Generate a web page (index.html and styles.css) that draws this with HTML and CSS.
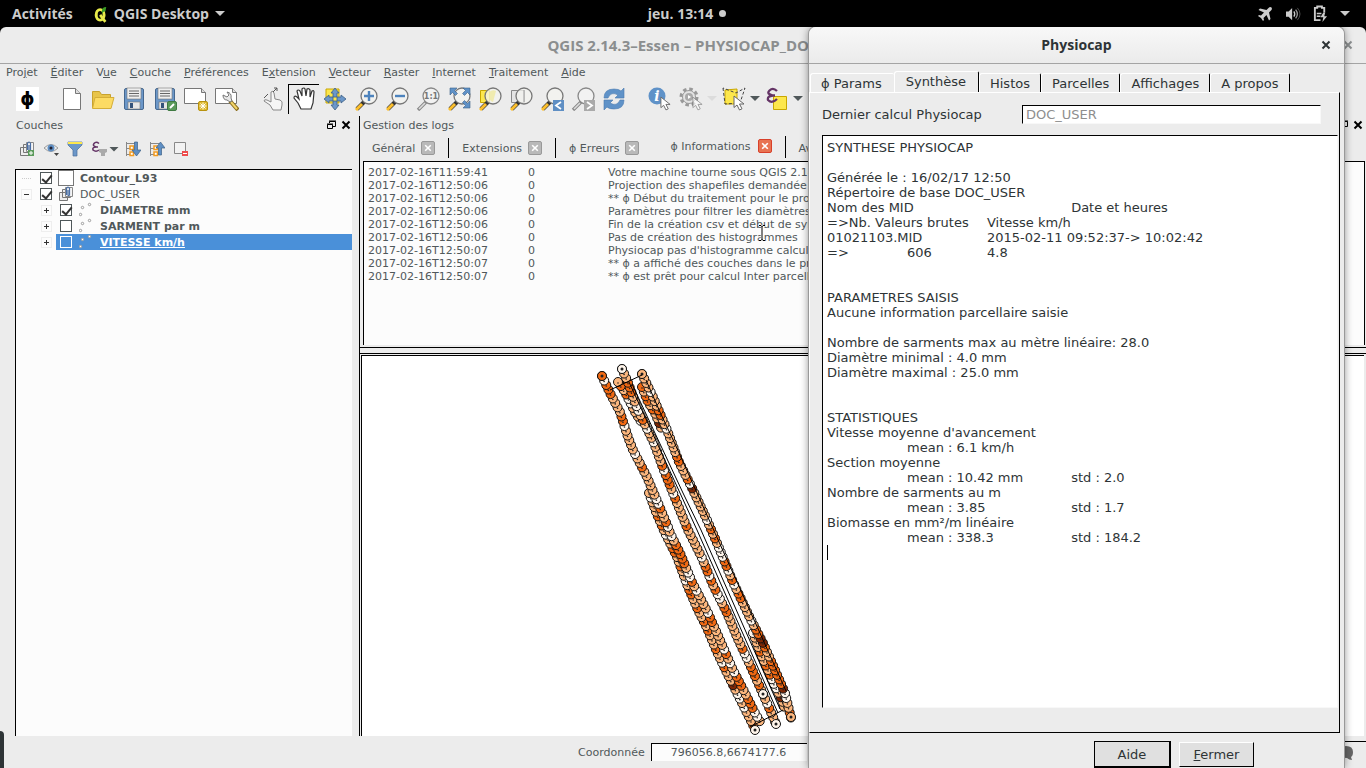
FILE: index.html
```html
<!DOCTYPE html>
<html lang="fr">
<head>
<meta charset="utf-8">
<title>QGIS 2.14.3–Essen – PHYSIOCAP_DOC</title>
<link rel="stylesheet" href="styles.css">
</head>
<body>
<svg class="defs" aria-hidden="true">
  <defs>
    <symbol id="lens" viewBox="0 0 24 24"><path d="M10 15 3 22" stroke="#333" stroke-width="4"/><path d="M8 17 2 23" stroke="#fcbf2d" stroke-width="3"/><circle cx="15" cy="9" r="8" fill="#f4f4f0" fill-opacity=".75" stroke="#777" stroke-width="1.3"/></symbol>
    <symbol id="lens-off" viewBox="0 0 24 24"><path d="M10 15 2 23" stroke="#888" stroke-width="3.4"/><path d="M9 16 3 22" stroke="#ddd" stroke-width="1.6"/><circle cx="15" cy="9" r="8" fill="#f4f4f4" fill-opacity=".75" stroke="#888" stroke-width="1.3"/></symbol>
    <symbol id="floppy" viewBox="0 0 24 24"><rect x="2.500" y="1.500" width="19" height="21" rx="1.500" fill="#6b97c9" stroke="#46688f"/><rect x="5" y="1" width="14" height="11" fill="#eee" stroke="#777" stroke-width=".6"/><path d="M7 4h10M7 6.500h10M7 9h10" stroke="#666"/><rect x="6" y="15" width="12" height="7" fill="#e6e6e6" stroke="#777" stroke-width=".6"/><rect x="8" y="16" width="3" height="5" fill="#34527a"/></symbol>
    <symbol id="pointer" viewBox="0 0 12 16"><path d="M1 1v11.500l3-2.500 2.500 5 2.500-1.200L6.500 9H11z" fill="#fff" stroke="#666"/></symbol>
    <symbol id="copies" viewBox="0 0 16 16"><path d="M1.500 6.500h8v8h-8zM4.500 3.500h8v8h-8z" fill="#eee" stroke="#777"/><path d="M10.500 1.500h4v9h-7v-9h3" fill="#f4f4f4" stroke="#888"/><path d="M8.500 9V2.500q1.500-3 3 0V9q-1 1.500-1.500 0V4" fill="none" stroke="#4a6fa5" stroke-width="1.200"/></symbol>
    <symbol id="points" viewBox="0 0 16 16"><g fill="#fff" stroke="#999"><circle cx="1.500" cy="12.500" r="1.200"/><circle cx="3.500" cy="5.500" r="1.200"/><circle cx="10.500" cy="2.500" r="1.200"/></g></symbol>
    <symbol id="tree-branch" viewBox="0 0 16 16"><path d="M1.500 1v14M1.500 2.500h9M1.500 7.500h4M1.500 13.500h4" stroke="#888" fill="none"/><g fill="#fff" stroke="#f29a1f" stroke-width="1.500"><rect x="5" y="5" width="3.500" height="3.500"/><rect x="5" y="11" width="3.500" height="3.500"/></g></symbol>
    <symbol id="cross" viewBox="0 0 10 10"><path d="m1.500 1.500 7 7m0-7-7 7" stroke="currentColor" stroke-width="2" fill="none"/></symbol>
    <symbol id="float" viewBox="0 0 10 10"><path d="M3.500 3V1.500h6v5H7M3 1h7" stroke="#000" fill="none"/><path d="M1.500 4.500h5v4h-5zM1 4h6" stroke="#000" fill="none"/></symbol>
  </defs>
</svg>

<header class="topbar">
  <button class="activities">Activités</button>
  <button class="app-menu">
    <svg class="app-logo" viewBox="0 0 16 20"><ellipse cx="7" cy="11" rx="4.500" ry="6" fill="none" stroke="#e8ea4a" stroke-width="3.400"/><path d="m7 11 6 8" stroke="#e8ea4a" stroke-width="3"/><path d="M9 7q0-5 5-5l-1 5q-2-1-4 3z" fill="#3a9a24"/></svg>
    QGIS Desktop
    <svg class="caret-down" viewBox="0 0 10 6"><path d="M0 0h10L5 5z" fill="#ccc"/></svg>
  </button>
  <div class="clock">jeu. 13:14<i class="clock-dot"></i></div>
  <div class="status-icons">
    <svg class="airplane" viewBox="0 0 16 16"><path d="M14.500 1.500q-1.500-1-3 .5L9.500 4 3 2.500 1.500 4 7 6.500 4 9.500 2 9 1 10l3 2 2 3 1-1-.5-2 3-3 2.500 5.500L13.500 13 12 6.500l2-2q1.500-1.500.5-3z" fill="#ccc"/></svg>
    <svg class="speaker" viewBox="0 0 18 16"><path d="M1 5h3l4-4v14l-4-4H1z" fill="#ccc"/><path d="M10 5q2 3 0 6" stroke="#ccc" stroke-width="1.500" fill="none"/><path d="M12 3q4 5 0 10" stroke="#999" stroke-width="1.500" fill="none"/><path d="M14 1q6 7 0 14" stroke="#555" fill="none"/></svg>
    <svg class="battery" viewBox="0 0 16 18"><path d="M12 8V3H9.500V1.500h-5V3H2v13h6" fill="none" stroke="#ccc" stroke-width="2"/><path d="M4 9h5M4 12h4" stroke="#ccc" stroke-width="1.500"/><path d="m11 8-3 5h3l-1 5 5-6h-3l1-4z" fill="#ccc"/></svg>
    <svg class="caret-down" viewBox="0 0 10 6"><path d="M0 0h10L5 5z" fill="#ccc"/></svg>
  </div>
</header>

<main class="window">
  <div class="titlebar main-title"><h1>QGIS 2.14.3–Essen – PHYSIOCAP_DOC</h1><button aria-label="Fermer la fenêtre"><svg viewBox="0 0 10 10"><use href="#cross"/></svg></button></div>
  <nav class="menubar">
    <button>Pro<u>j</u>et</button><button><u>É</u>diter</button><button>V<u>u</u>e</button><button><u>C</u>ouche</button><button><u>P</u>références</button><button>E<u>x</u>tension</button><button><u>V</u>ecteur</button><button><u>R</u>aster</button><button><u>I</u>nternet</button><button><u>T</u>raitement</button><button><u>A</u>ide</button>
  </nav>
  <div class="toolbar">
    <button class="phi-tool" aria-label="Physiocap">ϕ</button>
    <div class="tools">
      <button aria-label="Nouveau"><svg viewBox="0 0 24 24"><path d="M3.500 1.500h12l5 5v16h-17z" fill="#fff" stroke="#777"/><path d="M15.500 1.500v5h5" fill="#ddd" stroke="#777"/></svg></button>
      <button aria-label="Ouvrir"><svg viewBox="0 0 24 24"><path d="M1.500 21V4.500h7l2 3h9V11" fill="#e8c44a" stroke="#c8a22e"/><path d="M1.500 21.500 4 10.500h19l-3 11z" fill="#fcdb64" stroke="#d5ae38"/></svg></button>
      <button aria-label="Enregistrer"><svg viewBox="0 0 24 24"><use href="#floppy"/></svg></button>
      <button aria-label="Enregistrer sous"><svg viewBox="0 0 24 24"><use href="#floppy"/><rect x="14.500" y="14.500" width="9" height="9" rx="1.500" fill="#5b9a5b" stroke="#3f7a42"/><path d="m17 21 4-4" stroke="#fff" stroke-width="2"/></svg></button>
      <button aria-label="Nouveau composeur"><svg viewBox="0 0 24 24"><path d="M.5 1.500h17l4 4v11H.5z" fill="#fff" stroke="#777"/><path d="M17.500 1.500v4h4" fill="#ddd" stroke="#777"/><rect x="14.500" y="14.500" width="9" height="9" rx="1.500" fill="#e0b92e" stroke="#b8920f"/><path d="M19 15.500v7M15.500 19h7M16.500 16.500l5 5M21.500 16.500l-5 5" stroke="#fff"/></svg></button>
      <button aria-label="Gestionnaire de composeurs"><svg viewBox="0 0 24 24"><path d="M.5 1.500h17l4 4v11H.5z" fill="#fff" stroke="#777"/><path d="M17.500 1.500v4h4" fill="#ddd" stroke="#777"/><path d="m15 14 8 9" stroke="#8a6d1d" stroke-width="4"/><path d="m16 15 6 7" stroke="#f2d469" stroke-width="2"/><path d="M12 5q5 1 4 6l1 3-2 1-3-2q-4 0-4-5l4 2 2-2z" fill="#e8e8e8" stroke="#777"/></svg></button>
    </div>
    <div class="tools">
      <button aria-label="Zoom tactile"><svg viewBox="0 0 24 24"><path d="M12 23 9 18l-6-4q0-2 3-1l4 2V5q2-2 3 1l1 6 5 1q3 1 2 5l-1 5z" fill="#f6f6f6" stroke="#888"/><path d="m12 5 4-4m-3 0h3v3M7 7l-4 4" fill="none" stroke="#555"/></svg></button>
      <button class="pressed" aria-label="Se déplacer" aria-pressed="true"><svg viewBox="0 0 24 24"><path d="m9 22-3-6-4-5q0-3 3-1l2 2L5 4q1-2 3 0l2 5V2q2-2 3 0l1 7 1-7q2-1 3 1v7l2-6q2-1 2 1l-1 11-2 6z" fill="#fff" stroke="#333" stroke-width="1.200"/></svg></button>
      <button aria-label="Centrer sur la sélection"><svg viewBox="0 0 24 24"><path d="M3 2h13v14H3z" fill="#fde74c" stroke="#c9a700"/><path d="m12 1 4 5h-2v4h-4V6H8zM12 23l4-5h-2v-4h-4v4H8zM1 12l5-4v2h4v4H6v2zM23 12l-5-4v2h-4v4h4v2z" fill="#6b97c9" stroke="#3e6187" stroke-width=".8"/></svg></button>
      <button aria-label="Zoom +"><svg viewBox="0 0 24 24"><use href="#lens"/><path d="M10 9h10M15 4v10" stroke="#4d83bd" stroke-width="2.400"/></svg></button>
      <button aria-label="Zoom -"><svg viewBox="0 0 24 24"><use href="#lens"/><path d="M10 9h10" stroke="#4d83bd" stroke-width="2.400"/></svg></button>
      <button aria-label="Zoom 1:1"><svg viewBox="0 0 24 24"><use href="#lens-off"/><text x="15" y="12" class="ratio">1:1</text></svg></button>
      <button aria-label="Zoom étendu"><svg viewBox="0 0 24 24"><use href="#lens"/><path d="M3 1h7L7.500 3.500l3 3-2 2-3-3L3 8zM23 1h-7l2.500 2.500-3 3 2 2 3-3L23 8zM23 21h-7l2.500-2.500-3-3 2-2 3 3L23 14z" fill="#5f92c8" stroke="#3e6187" stroke-width=".6"/></svg></button>
      <button aria-label="Zoom sélection"><svg viewBox="0 0 24 24"><path d="M2.500 3.500h9v12h-9z" fill="#fde74c" stroke="#c9a700"/><use href="#lens"/><path d="M11 5q4-3 7-1l-3 11q-5-1-4-10z" fill="#efe9a0" opacity=".8"/></svg></button>
      <button aria-label="Zoom couche"><svg viewBox="0 0 24 24"><path d="M2.500 3.500h13v12h-13z" fill="#e4e4e4" stroke="#888"/><use href="#lens"/><path d="M15 3v12" stroke="#999"/></svg></button>
      <button aria-label="Zoom précédent"><svg viewBox="0 0 24 24"><use href="#lens"/><path d="M13 13h11v11H13z" fill="#5f8fc4"/><path d="m21 15-5 3.500 5 3.500" fill="none" stroke="#fff" stroke-width="1.800"/></svg></button>
      <button aria-label="Zoom suivant"><svg viewBox="0 0 24 24"><use href="#lens-off"/><path d="M13 13h11v11H13z" fill="#aaa"/><path d="m16 15 5 3.500-5 3.500" fill="none" stroke="#fff" stroke-width="1.800"/></svg></button>
      <button aria-label="Rafraîchir"><svg viewBox="0 0 24 24"><path d="M2 11q0-9 10-9 5 0 7 2l3-3v10h-9l3-3q-7-4-10 3zM22 13q0 9-10 9-5 0-7-2l-3 3V13h9l-3 3q7 4 10-3z" fill="#5f92c8" stroke="#4a7bb0" stroke-width=".6"/></svg></button>
    </div>
    <div class="tools">
      <button aria-label="Identifier"><svg viewBox="0 0 24 24"><circle cx="9" cy="9" r="8.500" fill="#5f92c8"/><text x="9" y="14" class="info-letter">i</text><use href="#pointer" x="12" y="9" width="11" height="15"/></svg></button>
      <button aria-label="Action"><svg viewBox="0 0 24 24"><circle cx="10" cy="10" r="8" fill="none" stroke="#999" stroke-width="3" stroke-dasharray="3.500 2.780"/><circle cx="10" cy="10" r="6.500" fill="#e4e4e4" stroke="#999"/><circle cx="10" cy="10" r="4" fill="#aaa"/><path d="m9 8 3 2-3 2z" fill="#fff"/><use href="#pointer" x="13" y="9" width="11" height="15" opacity=".6"/></svg></button>
      <span class="drop faint"></span>
      <button aria-label="Sélectionner"><svg viewBox="0 0 24 24"><path d="m3 3 12-1v15H3z" fill="#fde74c" stroke="#c9a700"/><path d="m1 1 2 16 15-1 5-15-9 5z" fill="none" stroke="#444" stroke-dasharray="3 2"/><use href="#pointer" x="11" y="8" width="12" height="16"/></svg></button>
      <span class="drop"></span>
      <button aria-label="Sélection par expression"><svg viewBox="0 0 24 24"><path d="M8.500 9.500h13v13h-13z" fill="#fde74c" stroke="#c9a700"/><path d="M12 4Q8 0 4.500 3.500T8 8.500Q2 9 3 13q4 4 9-1M6 8.500h4" fill="none" stroke="#643466" stroke-width="2.300"/></svg></button>
      <span class="drop"></span>
      <button aria-label="Désélectionner"><svg viewBox="0 0 24 24"><path d="M2.500 3.500h18v12h-18z" fill="#fde74c" stroke="#a88a00"/></svg></button>
    </div>
  </div>

  <div class="workspace">
    <section class="layers">
      <div class="dock-title"><h2>Couches</h2><button aria-label="Détacher"><svg viewBox="0 0 10 10"><use href="#float"/></svg></button><button aria-label="Fermer"><svg viewBox="0 0 10 10"><use href="#cross"/></svg></button></div>
      <div class="layer-tools">
        <button aria-label="Ajouter un groupe"><svg viewBox="0 0 16 16"><use href="#copies"/><path d="M9 9h6v6H9z" fill="#5b9a5b"/><path d="M12 10v4m-2-2h4" stroke="#fff"/></svg></button>
        <button aria-label="Visibilité"><svg viewBox="0 0 16 16"><path d="M1 7q7-7 14 0-7 7-14 0z" fill="#eee" stroke="#999"/><circle cx="8" cy="7" r="3.500" fill="#5f8fc4"/><circle cx="8" cy="7" r="1.500" fill="#223"/><path d="M11 12h5l-2.500 3z" fill="#444"/></svg></button>
        <button aria-label="Filtrer"><svg viewBox="0 0 16 16"><path d="M1 1h14v3L10 9v6H6V9L1 4z" fill="#6b97c9" stroke="#4a6f98" stroke-width=".7"/><path d="M1 1h14v2H1z" fill="#fde74c"/></svg></button>
        <button aria-label="Filtrer par expression"><svg viewBox="0 0 16 16"><path d="M8 2.500Q5 0 3 2.500T5.500 6Q1 6 2 9q3 2.500 6 0M4 6h3" fill="none" stroke="#643466" stroke-width="1.600"/><path d="M8 8h8v3l-2 1v3h-4v-3l-2-1z" fill="#aaa"/></svg></button>
        <span class="drop"></span>
        <button aria-label="Tout déplier"><svg viewBox="0 0 16 16"><use href="#tree-branch"/><path d="M9.500 1h3v8H16l-4.500 6L7 9h2.500z" fill="#5f8fc4" stroke="#3e6187" stroke-width=".7"/></svg></button>
        <button aria-label="Tout replier"><svg viewBox="0 0 16 16"><use href="#tree-branch"/><path d="M9.500 14h3V7H16l-4.500-6L7 7h2.500z" fill="#5f8fc4" stroke="#3e6187" stroke-width=".7"/></svg></button>
        <button aria-label="Supprimer"><svg viewBox="0 0 16 16"><path d="M1.500 1.500h11v11h-11z" fill="#f2f2f2" stroke="#888"/><path d="M9 10h6v5H9z" fill="#ee4b4b"/><path d="M10 12.500h4" stroke="#fff"/></svg></button>
      </div>
      <ul class="tree">
        <li class="row root"><span class="twig"></span><input type="checkbox" id="l1" checked><span class="swatch"></span><label for="l1"><b>Contour_L93</b></label></li>
        <li class="row root"><span class="expander open"></span><input type="checkbox" id="l2" checked><svg class="layer-icon" viewBox="0 0 16 16"><use href="#copies"/></svg><label for="l2">DOC_USER</label></li>
        <li class="row child"><span class="expander"></span><div class="entry"><input type="checkbox" id="l3" checked><svg class="layer-icon" viewBox="0 0 16 16"><use href="#points"/></svg><label for="l3"><b>DIAMETRE mm</b></label></div></li>
        <li class="row child"><span class="expander"></span><div class="entry"><input type="checkbox" id="l4"><svg class="layer-icon" viewBox="0 0 16 16"><use href="#points"/></svg><label for="l4"><b>SARMENT par m</b></label></div></li>
        <li class="row child selected"><span class="expander"></span><div class="entry"><input type="checkbox" id="l5"><svg class="layer-icon" viewBox="0 0 16 16"><use href="#points"/></svg><label for="l5"><b>VITESSE km/h</b></label></div></li>
      </ul>
    </section>

    <div class="center">
      <section class="logs">
        <div class="dock-title"><h2>Gestion des logs</h2><button aria-label="Détacher"><svg viewBox="0 0 10 10"><use href="#float"/></svg></button><button aria-label="Fermer"><svg viewBox="0 0 10 10"><use href="#cross"/></svg></button></div>
        <div class="log-tabs">
          <button>Général<span class="tab-close"><svg viewBox="0 0 10 10"><use href="#cross"/></svg></span></button>
          <button>Extensions<span class="tab-close"><svg viewBox="0 0 10 10"><use href="#cross"/></svg></span></button>
          <button class="before-active">ϕ Erreurs<span class="tab-close"><svg viewBox="0 0 10 10"><use href="#cross"/></svg></span></button>
          <button class="active">ϕ Informations<span class="tab-close"><svg viewBox="0 0 10 10"><use href="#cross"/></svg></span></button>
          <button>Avertissements</button>
        </div>
        <div class="log-box">
          <table class="log-table">
            <tr><td>2017-02-16T11:59:41</td><td>0</td><td>Votre machine tourne sous QGIS 2.14</td></tr>
            <tr><td>2017-02-16T12:50:06</td><td>0</td><td>Projection des shapefiles demandée</td></tr>
            <tr><td>2017-02-16T12:50:06</td><td>0</td><td>** ϕ Début du traitement pour le projet</td></tr>
            <tr><td>2017-02-16T12:50:06</td><td>0</td><td>Paramètres pour filtrer les diamètres</td></tr>
            <tr><td>2017-02-16T12:50:06</td><td>0</td><td>Fin de la création csv et début de synthèse</td></tr>
            <tr><td>2017-02-16T12:50:06</td><td>0</td><td>Pas de création des histogrammes</td></tr>
            <tr><td>2017-02-16T12:50:07</td><td>0</td><td>Physiocap pas d'histogramme calculé</td></tr>
            <tr><td>2017-02-16T12:50:07</td><td>0</td><td>** ϕ a affiché des couches dans le projet</td></tr>
            <tr><td>2017-02-16T12:50:07</td><td>0</td><td>** ϕ est prêt pour calcul Inter parcellaire</td></tr>
          </table>
          <svg class="ibeam" viewBox="0 0 8 16"><path d="M1 .5h2l1 1 1-1h2M4 1v14M1 15.500h2l1-1 1 1h2" fill="none" stroke="#fff" stroke-width="2.500"/><path d="M1 .5h2l1 1 1-1h2M4 1v14M1 15.500h2l1-1 1 1h2" fill="none" stroke="#000"/></svg>
        </div>
      </section>
      <div class="splitter"></div>
      <section class="map" aria-label="Carte"><svg id="canvas"></svg></section>
    </div>
  </div>

  <footer class="statusbar">
    <label for="coord">Coordonnée</label>
    <input id="coord" type="text" value="796056.8,6674177.6">
    <div class="status-fill"></div>
    <svg class="bubble" viewBox="0 0 16 16"><path d="M8 1q7 0 7 6 0 4-2 5l1 3q-3 0-5-2-8 0-8-6 0-6 7-6z" fill="#666"/></svg>
  </footer>
  <div class="tray-handle"></div>
</main>

<section class="dialog" role="dialog" aria-label="Physiocap">
  <div class="titlebar dialog-title"><h2>Physiocap</h2><button aria-label="Fermer"><svg viewBox="0 0 10 10"><use href="#cross"/></svg></button></div>
  <div class="dialog-tabs">
    <button>ϕ Params</button><button class="active">Synthèse</button><button>Histos</button><button>Parcelles</button><button>Affichages</button><button>A propos</button>
  </div>
  <div class="pane">
    <div class="field"><label for="last">Dernier calcul Physiocap</label><input id="last" type="text" value="DOC_USER" disabled></div>
    <div class="report-wrap">
<textarea class="report" aria-label="Synthèse" spellcheck="false" readonly>
SYNTHESE PHYSIOCAP

Générée le : 16/02/17 12:50
Répertoire de base DOC_USER
Nom des MID&#9;&#9; Date et heures
=&gt;Nb. Valeurs brutes&#9;Vitesse km/h
01021103.MID&#9;2015-02-11 09:52:37-&gt; 10:02:42
=&gt;&#9;606&#9;4.8


PARAMETRES SAISIS
Aucune information parcellaire saisie

Nombre de sarments max au mètre linéaire: 28.0
Diamètre minimal : 4.0 mm
Diamètre maximal : 25.0 mm


STATISTIQUES
Vitesse moyenne d'avancement
&#9;mean : 6.1 km/h
Section moyenne
&#9;mean : 10.42 mm&#9; std : 2.0
Nombre de sarments au m
&#9;mean : 3.85&#9; std : 1.7
Biomasse en mm²/m linéaire
&#9;mean : 338.3&#9; std : 184.2
</textarea>
      <span class="text-caret"></span>
    </div>
  </div>
  <div class="dialog-actions"><button class="default">Aide</button><button><u>F</u>ermer</button></div>
</section>
<script src="map.js"></script>
</body>
</html>
```

FILE: styles.css
```css
* { box-sizing: border-box; }
html, body { height: 100%; }
body {
  margin: 0;
  display: flex;
  flex-direction: column;
  overflow: hidden;
  background: #000;
  color: #50585a;
  font: 11px/13px "DejaVu Sans", sans-serif;
}
button {
  margin: 0;
  padding: 0;
  border: 0;
  background: none;
  color: inherit;
  font: inherit;
  white-space: nowrap;
}
svg { display: block; flex: none; }
h1, h2 { margin: 0; font: inherit; }
.defs { position: absolute; width: 0; height: 0; }

/* Desktop bar */
.topbar {
  position: relative;
  flex: none;
  height: 27px;
  display: flex;
  align-items: center;
  padding: 0 16px 0 12px;
  color: #ccc;
  font: bold 14px/20px "Open Sans", sans-serif;
}
.activities { margin-right: 21px; }
.app-menu { display: flex; align-items: center; gap: 6px; }
.app-logo { width: 14px; height: 18px; }
.caret-down { width: 10px; height: 6px; }
.clock {
  position: absolute;
  left: 0;
  right: 0;
  padding-left: 8px;
  text-align: center;
  pointer-events: none;
}
.clock-dot {
  display: inline-block;
  width: 7px;
  height: 7px;
  margin: 0 0 2px 6px;
  border-radius: 50%;
  background: #ccc;
}
.status-icons { margin-left: auto; display: flex; align-items: center; gap: 12px; }
.airplane { width: 16px; height: 16px; }
.speaker { width: 16px; height: 14px; }
.battery { width: 15px; height: 17px; }

/* Main window */
.window {
  position: relative;
  flex: 1;
  min-height: 0;
  display: flex;
  flex-direction: column;
  background: #ececec;
  border-radius: 6px 6px 0 0;
}
.titlebar {
  flex: none;
  position: relative;
  height: 37px;
  display: flex;
  align-items: center;
  justify-content: center;
  border-bottom: 1px solid #a4a4a4;
  color: #8b8e8f;
  font: bold 14px/20px "Open Sans", sans-serif;
}
.main-title { font-size: 15px; }
.titlebar button { position: absolute; right: 13px; }
.titlebar svg { width: 10px; height: 10px; }
.menubar { flex: none; display: flex; gap: 13px; padding: 2px 6px; }
.toolbar { flex: none; height: 35px; display: flex; align-items: center; padding-left: 16px; overflow: hidden; }
.phi-tool {
  width: 23px;
  height: 24px;
  margin-right: 17px;
  background: #fff;
  color: #000;
  font: bold 18px/24px "DejaVu Sans", sans-serif;
}
.tools { display: flex; align-items: center; margin-right: 15px; }
.tools button { width: 31px; height: 30px; display: flex; align-items: center; justify-content: center; }
.tools svg { width: 24px; height: 24px; }
.tools .pressed { border-top: 1px solid #000; border-left: 1px solid #000; }
.ratio { font: bold 8px "DejaVu Sans", sans-serif; text-anchor: middle; fill: #777; }
.info-letter { font: italic bold 14px "DejaVu Serif", serif; text-anchor: middle; fill: #fff; }
.drop { flex: none; width: 10px; height: 5px; margin: 0 1px; background: #50585a; clip-path: polygon(0 0, 100% 0, 50% 100%); }
.drop.faint { background: #dcdcdc; }

.workspace { flex: 1; min-height: 0; display: flex; }
.dock-title { flex: none; height: 18px; display: flex; align-items: center; gap: 5px; }
.dock-title h2 { flex: 1; }
.dock-title button { color: #000; }
.dock-title svg { width: 10px; height: 10px; }

/* Layer dock */
.layers { flex: none; width: 352px; display: flex; flex-direction: column; padding-left: 15px; }
.layers .dock-title { padding: 0 1px; }
.layer-tools { display: flex; align-items: center; gap: 8px; height: 35px; padding: 0 4px 5px; }
.layer-tools svg { width: 16px; height: 16px; }
.layer-tools .drop { margin: 0 -2px 0 -6px; }
.tree {
  flex: 1;
  margin: 0;
  padding: 0;
  list-style: none;
  background: #fcfcfc;
  border-top: 1px solid #000;
  border-left: 1px solid #000;
}
.row { height: 16px; display: flex; align-items: center; }
.root { padding-left: 6px; gap: 6px; }
.root input { margin-left: 3px; }
.child { padding-left: 26px; gap: 5px; }
.entry { flex: 1; height: 16px; display: flex; align-items: center; gap: 7px; padding-left: 4px; }
.selected .entry { background: #4a90d9; color: #fff; text-decoration: underline; }
.twig { width: 9px; border-top: 1px dotted #ccc; }
.expander {
  flex: none;
  width: 9px;
  height: 9px;
  outline: 1px solid #eee;
  background:
    linear-gradient(#333, #333) center / 5px 1px no-repeat,
    linear-gradient(#333, #333) center / 1px 5px no-repeat;
}
.expander.open { background: linear-gradient(#333, #333) center / 5px 1px no-repeat; }
.tree input {
  flex: none;
  appearance: none;
  position: relative;
  width: 12px;
  height: 12px;
  border: 1px solid #50585a;
  background: #fff;
}
.entry input { margin: 0; }
.root input { margin: 0 0 0 3px; }
.tree input:checked::after {
  content: "";
  position: absolute;
  left: 3px;
  top: 0;
  width: 4px;
  height: 8px;
  border: solid #333;
  border-width: 0 2px 2px 0;
  transform: rotate(40deg);
}
.selected .entry input { background: transparent; border-color: #fff; }
.swatch { width: 16px; height: 16px; border: 1px solid #777; background: #fff; }
.layer-icon { width: 16px; height: 16px; }
.entry .layer-icon { margin-right: -2px; }

/* Log dock and map */
.center { flex: 1; min-width: 0; margin-left: 7px; display: flex; flex-direction: column; border-left: 1px solid #000; }
.logs { flex: none; padding: 0 1px 2px 3px; }
.logs .dock-title { padding-right: 2px; }
.log-tabs { display: flex; height: 27px; overflow: hidden; align-items: flex-end; padding-bottom: 3px; }
.log-tabs button {
  height: 20px;
  display: flex;
  align-items: center;
  gap: 6px;
  padding: 0 13px;
  border-right: 1px solid #000;
}
.log-tabs button:first-child { padding-left: 9px; }
.log-tabs .before-active { border-right: 0; }
.log-tabs .active { height: 22px; padding-left: 18px; padding-bottom: 2px; gap: 7px; }
.tab-close { width: 14px; height: 14px; padding: 2px; border: 1px solid #999; border-radius: 2px; background: #b9b9b9; color: #fff; }
.tab-close svg { width: 8px; height: 8px; }
.active .tab-close { background: #e87352; border-color: #d8402a; }
.log-box {
  position: relative;
  height: 184px;
  padding: 4px;
  overflow: hidden;
  background: #fcfcfc;
  border: 1px solid #000;
  border-bottom: 0;
}
.log-table { border-collapse: collapse; table-layout: fixed; width: 100%; white-space: nowrap; }
.log-table td { padding: 0; height: 13px; line-height: 13px; }
.log-table td:first-child { width: 160px; }
.log-table td:nth-child(2) { width: 80px; }
.ibeam { position: absolute; left: 394px; top: 63px; width: 8px; height: 16px; }
.splitter { flex: none; height: 7px; border-top: 1px solid #000; border-bottom: 1px solid #000; }
.map { flex: 1; min-height: 0; margin: 1px 2px 0 1px; background: #fff; border-top: 1px solid #000; border-left: 1px solid #000; }
.map svg { width: 100%; height: 100%; }

.statusbar { flex: none; height: 32px; display: flex; align-items: center; gap: 6px; padding: 0 2px 0 578px; }
.statusbar input {
  width: 156px;
  height: 18px;
  padding: 0 0 0 19px;
  border: 0;
  border-top: 1px solid #000;
  border-left: 1px solid #000;
  background: #fcfcfc;
  color: inherit;
  font: inherit;
}
.status-fill { flex: 1; height: 22px; border-top: 1px solid #000; }
.bubble { width: 16px; height: 16px; margin: 2px 10px 0 -36px; }
.tray-handle { position: absolute; left: 0; bottom: 0; width: 4px; height: 37px; border-radius: 0 4px 0 0; background: #2e3436; }

/* Physiocap dialog */
.dialog {
  position: absolute;
  top: 27px;
  right: 22px;
  bottom: 0;
  width: min(535px, 96vw);
  display: flex;
  flex-direction: column;
  border-radius: 7px 7px 0 0;
  background: #ececec;
  box-shadow: 0 0 0 1px #999, 0 0 8px rgba(0, 0, 0, .5);
  color: #2e3436;
  font-size: 13px;
  line-height: 15px;
  clip-path: inset(0 -12px 0 -12px);
}
.dialog-title { border-radius: 7px 7px 0 0; background: linear-gradient(#f8f8f8, #ebebeb); color: #2e3436; }
.dialog-tabs { flex: none; height: 28px; display: flex; align-items: flex-end; padding-left: 1px; }
.dialog-tabs button {
  height: 19px;
  padding: 0 10px;
  border-top: 1px solid #fff;
  border-left: 1px solid #fff;
  border-right: 1px solid #000;
  border-radius: 3px 2px 0 0;
}
.dialog-tabs button:first-child { padding: 0 12px 0 10px; border-right: 0; }
.dialog-tabs .active { height: 21px; padding: 0 12px 2px 11px; }
.pane {
  flex: 1;
  min-height: 0;
  margin-right: 4px;
  padding: 12px 1px 24px 12px;
  display: flex;
  flex-direction: column;
  gap: 11px;
  border-top: 1px solid #fff;
  border-left: 1px solid #fff;
  border-right: 1px solid #000;
  border-bottom: 1px solid #000;
}
.field { display: flex; align-items: center; padding-right: 17px; }
.field label { width: 200px; padding-right: 8px; }
.field input {
  flex: 1;
  min-width: 0;
  height: 19px;
  padding: 0 3px;
  border: 1px solid;
  border-color: #000 #f8f8f8 #f8f8f8 #000;
  background: #fff;
  color: #8e8e8e;
  font: inherit;
}
.report-wrap { flex: 1; position: relative; display: flex; }
.report {
  flex: 1;
  margin: 0;
  padding: 4px;
  border: 1px solid;
  border-color: #000 #f8f8f8 #f8f8f8 #000;
  outline: 0;
  resize: none;
  overflow: hidden;
  background: #fff;
  color: inherit;
  font: 13px/15px "DejaVu Sans", sans-serif;
  white-space: pre;
  tab-size: 80px;
}
.text-caret { position: absolute; left: 5px; top: 410px; width: 1px; height: 15px; background: #000; }
.dialog-actions { flex: none; height: 35px; display: flex; align-items: flex-start; justify-content: flex-end; gap: 8px; padding: 8px 90px 0 0; }
.dialog-actions button {
  width: 75px;
  height: 25px;
  margin-top: 1px;
  border: 1px solid;
  border-color: #fff #000 #000 #fff;
  background: #e0e0e0;
}
.dialog-actions .default { width: 77px; height: 27px; margin-top: 0; border-color: #000; border-width: 1px 2px 2px 1px; }
```

FILE: map.js
```javascript
// Draws the measurement points of the DIAMETRE layer along each vine row.
const NS = "http://www.w3.org/2000/svg";
const canvas = document.getElementById("canvas");
const fills = { p: "#fdb77e", o: "#f16913", w: "#fff5eb", d: "#7f2704" };

const rows = [
  { path: [[287, 137], [294, 156], [303, 177], [315, 201], [326, 231], [336, 254], [345, 272], [355, 296], [365, 317], [375, 337], [385, 357], [393, 373]],
    colors: "pwpppopopwppooppoppwpooppoppopopppoppwopppdpww" },
  { path: [[256, 26], [263, 36], [268, 46], [273, 56], [280, 67]],
    colors: "popowwpppw" },
  { path: [[280, 31], [286, 46], [293, 57], [300, 74]],
    colors: "opoopoppdp" },
  { path: [[391, 277], [400, 301], [406, 314], [411, 326], [415, 334], [420, 344], [423, 354]],
    colors: "wpppoppopowwwpdpp" },
  { path: [[240, 20], [248, 37], [258, 56], [266, 81], [271, 94], [285, 121], [296, 147], [306, 171], [308, 177], [318, 197], [330, 226], [346, 257], [358, 284], [371, 314], [383, 337], [393, 357], [400, 369]],
    colors: "owoooppppoowpppppwppoppppppwwoppowpwpooooopwwopwppppwoopppppwopwpwoooppooowwppppppwppopwo" },
  { path: [[260, 13], [265, 24], [276, 54], [292, 87], [301, 112], [315, 147], [326, 174], [340, 202], [351, 229], [365, 257], [375, 281], [388, 309], [401, 338], [408, 354], [414, 368]],
    colors: "wppoooppwwpopwppwppppowooopwopppppoppppppwpoowopowwpoopppppppowwpooopopppwopppoopowoopwwoppww" },
  { path: [[280, 18], [291, 41], [305, 74], [317, 106], [331, 134], [345, 164], [355, 187], [371, 226], [388, 262], [401, 287], [413, 314], [423, 337], [429, 362]],
    colors: "ppppwpppooppwpppppoopppowdppppppwpopopwwwoowpowpooppppwpooddoppoooooodwwppoppwpppoowppwwooppopoo" }
];

function add(name, attributes) {
  const node = document.createElementNS(NS, name);
  for (const key in attributes) node.setAttribute(key, attributes[key]);
  canvas.appendChild(node);
}

// Evenly spaced positions along a polyline.
function sample(path, step) {
  const out = [path[0]];
  let rest = step;
  for (let i = 1; i < path.length; i++) {
    const [x0, y0] = path[i - 1];
    const [x1, y1] = path[i];
    const length = Math.hypot(x1 - x0, y1 - y0);
    while (rest <= length) {
      out.push([x0 + (x1 - x0) * rest / length, y0 + (y1 - y0) * rest / length]);
      rest += step;
    }
    rest -= length;
  }
  return out;
}

for (const row of rows) {
  const points = sample(row.path, 5);
  for (let i = points.length - 1; i >= 0; i--) {
    const [cx, cy] = points[i];
    const color = fills[row.colors[i % row.colors.length]];
    add("circle", { cx, cy, r: 4.5, fill: color, stroke: "#111" });
    add("circle", { cx, cy: cy + 1, r: 0.8, fill: "#222" });
  }
}
for (const [cx, cy, key] of [[240, 20, "o"], [260, 13, "w"], [280, 18, "p"], [401, 338, "w"], [393, 374, "w"], [414, 368, "w"], [429, 361, "p"]]) {
  add("circle", { cx, cy, r: 4.5, fill: fills[key], stroke: "#111" });
  add("circle", { cx, cy, r: 1.5, fill: "#222" });
}
// Parcel outlines.
for (const d of ["M248 34 280 19", "M267 26 318 137 335 174 416 357", "M270 28 321 137 339 174 418 353", "M284 24 298 56 313 88 424 335", "M388 371 421 354"]) {
  add("path", { d, fill: "none", stroke: "#000" });
}
```
